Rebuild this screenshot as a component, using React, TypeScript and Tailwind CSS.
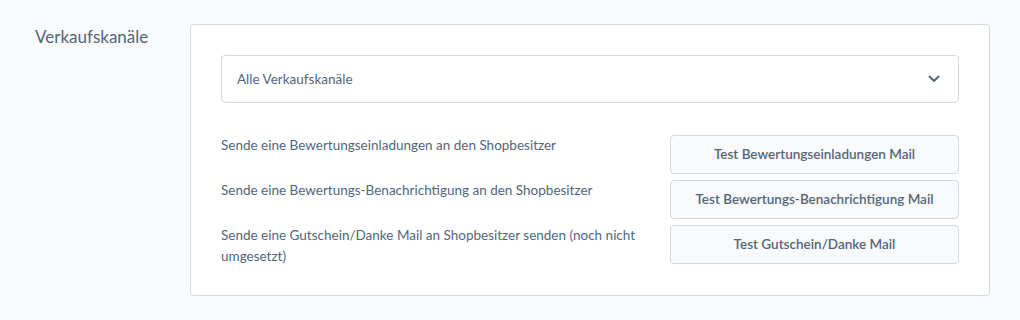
const rows = [
  {
    text: "Sende eine Bewertungseinladungen an den Shopbesitzer",
    button: "Test Bewertungseinladungen Mail",
  },
  {
    text: "Sende eine Bewertungs-Benachrichtigung an den Shopbesitzer",
    button: "Test Bewertungs-Benachrichtigung Mail",
  },
  {
    text: "Sende eine Gutschein/Danke Mail an Shopbesitzer senden (noch nicht umgesetzt)",
    button: "Test Gutschein/Danke Mail",
  },
];

export default function App() {
  return (
    <div
      className="min-h-[320px] w-[1020px] bg-[#f9fafb] text-[#52667a] flex pt-6 pl-[35px]"
      style={{ fontFamily: "Lato, 'Noto Sans', sans-serif" }}
    >
      <div className="w-[155px] shrink-0 pt-[1px] text-[17px] leading-[24px]">Verkaufskanäle</div>

      <div className="w-[800px] h-[272px] bg-white border border-[#d1d9e0] rounded-[4px] p-[30px]">
        <div className="h-[48px] border border-[#d1d9e0] rounded-[4px] flex items-center justify-between pl-[15px] pr-[18px] text-[13.5px]">
          <span>Alle Verkaufskanäle</span>
          <svg width="12" height="8" viewBox="0 0 12 8" fill="none">
            <path d="M1.5 1.5L6 6L10.5 1.5" stroke="#52667a" strokeWidth="2" strokeLinecap="round" strokeLinejoin="round" />
          </svg>
        </div>

        <div className="mt-[32px] flex flex-col gap-[6px]">
          {rows.map((r) => (
            <div key={r.button} className="flex justify-between">
              <div className="w-[420px] text-[13.5px] leading-[21px]">{r.text}</div>
              <button className="w-[289px] h-[39px] bg-[#f9fafb] border border-[#d1d9e0] rounded-[4px] text-[13.5px] font-semibold text-[#52667a]">
                {r.button}
              </button>
            </div>
          ))}
        </div>
      </div>
    </div>
  );
}
